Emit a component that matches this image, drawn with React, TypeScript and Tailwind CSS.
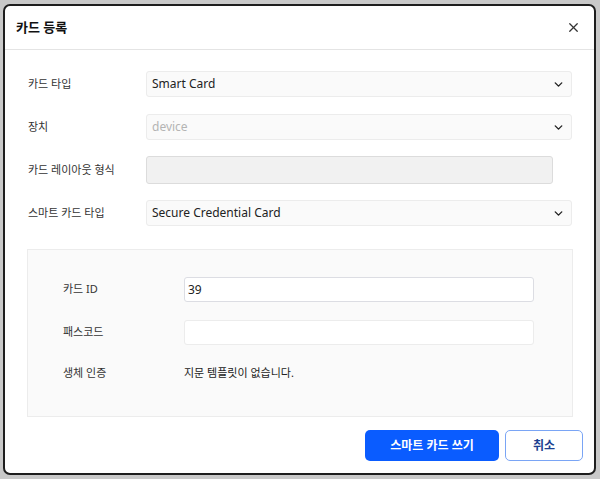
import { ChevronDown, X } from "lucide-react";

const FONT = "font-['Noto_Sans','Noto_Sans_CJK_KR',sans-serif]";

function Select({ value, muted }: { value: string; muted?: boolean }) {
  return (
    <div className="flex h-[26px] w-[426px] items-center justify-between rounded-[3px] border border-[#ececec] bg-[#fafafa] pl-[5px] pr-[6px]">
      <span className={`text-[12px] ${muted ? "text-[#b4b4b4]" : "text-[#222]"}`}>{value}</span>
      <ChevronDown size={13} strokeWidth={2.6} className="text-[#222]" />
    </div>
  );
}

function Row({ label, children }: { label: string; children: React.ReactNode }) {
  return (
    <div className="flex h-[26px] items-center">
      <div className="w-[118px] text-[11px] text-[#333]">{label}</div>
      {children}
    </div>
  );
}

function Field({ label, children }: { label: string; children: React.ReactNode }) {
  return (
    <div className="flex h-[25px] items-center">
      <div className="w-[121px] text-[11px] text-[#333]">{label}</div>
      {children}
    </div>
  );
}

export default function App() {
  return (
    <div className={`h-[479px] w-[600px] overflow-hidden bg-[#c9c9c9] pl-[3px] pt-[4px] ${FONT}`}>
      <div className="flex h-[471px] w-[593px] flex-col rounded-[7px] border-2 border-[#1e1e1e] bg-white">
        <header className="flex h-[44px] shrink-0 items-center justify-between border-b border-[#e4e4e4] pl-[11px] pr-[13px]">
          <h1 className="text-[13px] font-bold text-[#111]">카드 등록</h1>
          <X size={15} strokeWidth={2} className="text-[#333]" />
        </header>

        <main className="flex flex-col pl-[23px] pr-[21px] pt-[21px]">
          <div className="flex flex-col gap-[17px]">
            <Row label="카드 타입">
              <Select value="Smart Card" />
            </Row>
            <Row label="장치">
              <Select value="device" muted />
            </Row>
            <Row label="카드 레이아웃 형식">
              <div className="h-[28px] w-[407px] rounded-[3px] border border-[#dcdcdc] bg-[#f1f1f1]" />
            </Row>
            <Row label="스마트 카드 타입">
              <Select value="Secure Credential Card" />
            </Row>
          </div>

          <section className="mt-[23px] ml-[-1px] flex h-[168px] w-[546px] flex-col border border-[#ececec] bg-[#fafafa] pl-[35px] pt-[27px]">
            <div className="flex flex-col gap-[18px]">
              <Field label="카드 ID">
                <div className="flex h-[25px] w-[350px] items-center rounded-[3px] border border-[#dcdde3] bg-white px-[3px] text-[12px] text-[#222]">
                  39
                </div>
              </Field>
              <Field label="패스코드">
                <div className="h-[25px] w-[350px] rounded-[3px] border border-[#ececec] bg-white" />
              </Field>
            </div>
            <div className="mt-[20px] flex items-center">
              <div className="w-[121px] text-[11px] text-[#333]">생체 인증</div>
              <div className="text-[11px] text-[#222]">지문 템플릿이 없습니다.</div>
            </div>
          </section>

          <div className="mt-[13px] flex justify-end gap-[6px] pr-[-10px] mr-[-10px]">
            <button className="h-[31px] w-[134px] rounded-[5px] bg-[#0a5cff] text-[12px] font-bold text-white">
              스마트 카드 쓰기
            </button>
            <button className="h-[31px] w-[78px] rounded-[5px] border border-[#7aa5f5] bg-white text-[12px] font-bold text-[#1b3f8f]">
              취소
            </button>
          </div>
        </main>
      </div>
    </div>
  );
}
